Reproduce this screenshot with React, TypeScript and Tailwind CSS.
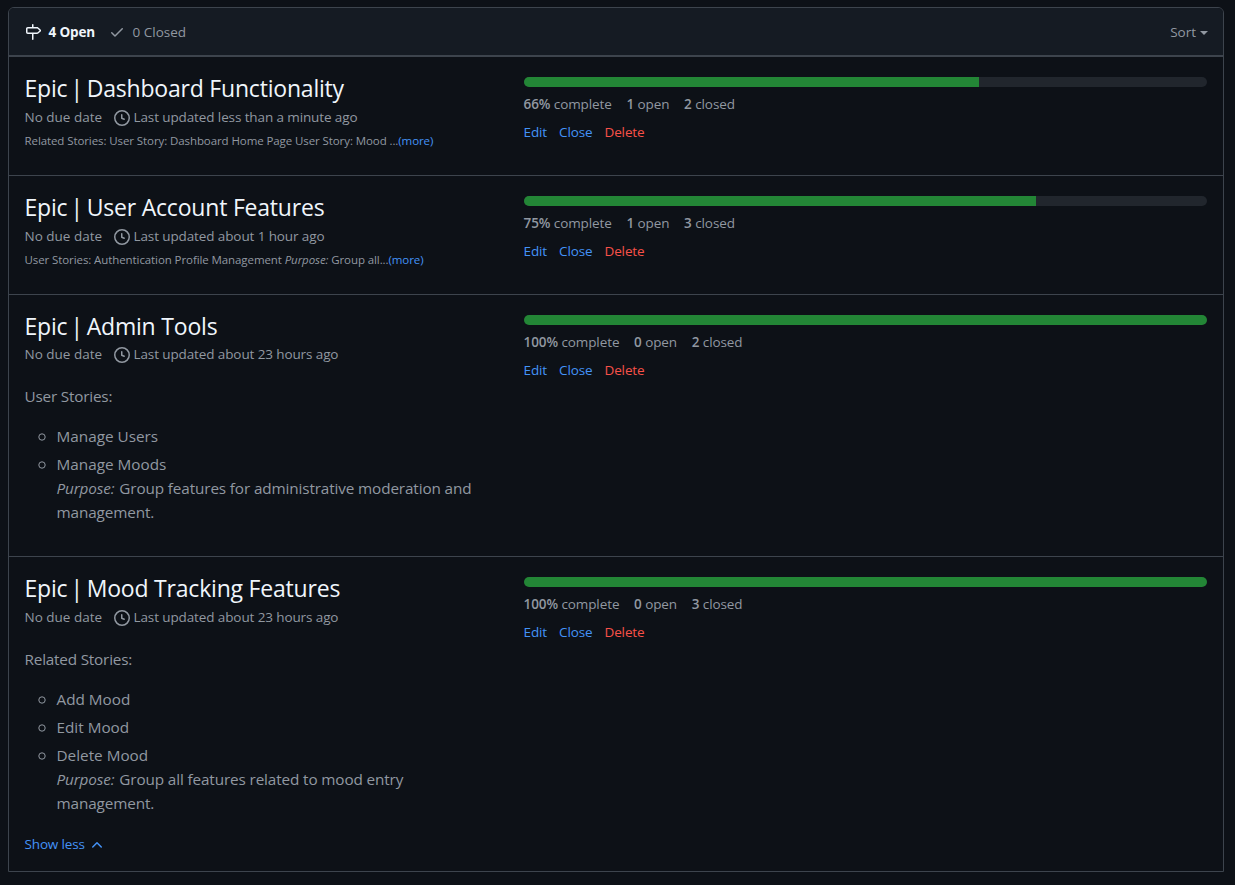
import type { ReactNode } from "react";

const ICONS = {
  milestone:
    "M7.75 0a.75.75 0 0 1 .75.75V3h3.634c.414 0 .814.147 1.13.414l2.07 1.75a1.75 1.75 0 0 1 0 2.672l-2.07 1.75a1.75 1.75 0 0 1-1.13.414H8.5v5.25a.75.75 0 0 1-1.5 0V10H2.75A1.75 1.75 0 0 1 1 8.25v-3.5C1 3.784 1.784 3 2.75 3H7V.75A.75.75 0 0 1 7.75 0Zm4.384 8.5a.25.25 0 0 0 .161-.06l2.07-1.75a.248.248 0 0 0 0-.38l-2.07-1.75a.25.25 0 0 0-.161-.06H2.75a.25.25 0 0 0-.25.25v3.5c0 .138.112.25.25.25h9.384Z",
  check:
    "M13.78 4.22a.75.75 0 0 1 0 1.06l-7.25 7.25a.75.75 0 0 1-1.06 0L2.22 9.28a.751.751 0 0 1 .018-1.042.751.751 0 0 1 1.042-.018L6 10.94l6.72-6.72a.75.75 0 0 1 1.06 0Z",
  clock:
    "M8 0a8 8 0 1 1 0 16A8 8 0 0 1 8 0ZM1.5 8a6.5 6.5 0 1 0 13 0 6.5 6.5 0 0 0-13 0Zm7-3.25v2.992l2.028.812a.75.75 0 0 1-.557 1.392l-2.5-1A.751.751 0 0 1 7 8.25v-3.5a.75.75 0 0 1 1.5 0Z",
  chevronUp:
    "M3.22 10.53a.749.749 0 0 1 0-1.06l4.25-4.25a.749.749 0 0 1 1.06 0l4.25 4.25a.749.749 0 1 1-1.06 1.06L8 6.811 4.28 10.53a.749.749 0 0 1-1.06 0Z",
};

function Icon({ name, className = "" }: { name: keyof typeof ICONS; className?: string }) {
  return (
    <svg viewBox="0 0 16 16" className={`size-4 shrink-0 fill-current ${className}`} aria-hidden="true">
      <path d={ICONS[name]} />
    </svg>
  );
}

type MilestoneProps = {
  title: string;
  updated: string;
  percent: number;
  fill: number;
  open: number;
  closed: number;
  height: string;
  metaHeight?: string;
  children: ReactNode;
};

function Milestone({ title, updated, percent, fill, open, closed, height, metaHeight = "h-[28px]", children }: MilestoneProps) {
  return (
    <li className={`flex border-t border-[#3d444d] pl-[15.5px] pr-4 pt-4 ${height}`}>
      <div className="w-[499px] shrink-0 pr-8">
        <h2 className="flex h-[30px] whitespace-pre text-[23px] leading-[30px] tracking-[-0.2px] text-[#f0f6fc]">
          <span className="w-[46px]">Epic</span>
          <span className="w-[16.2px]">|</span>
          <span>{title}</span>
        </h2>
        <div className={`flex items-center whitespace-nowrap text-[13.5px] ${metaHeight}`}>
          <span className="w-[89.5px]">No due date</span>
          <Icon name="clock" className="mr-[3.5px] mt-px" />
          <span className="tracking-[-0.11px]">{updated}</span>
        </div>
        {children}
      </div>
      <div className="flex-1 pt-1">
        <div className="h-2.5 overflow-hidden rounded-full bg-[#21262d]">
          <div className="h-full bg-[#238636]" style={{ width: `${fill}%` }} />
        </div>
        <div className="mt-[7px] flex h-5 items-center gap-[14.7px] text-[13.5px] tracking-[-0.09px]">
          <span><b className="font-semibold">{percent}%</b> complete</span>
          <span><b className="font-semibold">{open}</b> open</span>
          <span><b className="font-semibold">{closed}</b> closed</span>
        </div>
        <div className="mt-2 flex h-5 items-center gap-3 text-[13.5px] tracking-[-0.12px] text-[#4493f8]">
          <a>Edit</a>
          <a>Close</a>
          <a className="text-[#f85149]">Delete</a>
        </div>
      </div>
    </li>
  );
}

function Summary({ children }: { children: ReactNode }) {
  return (
    <p className="mt-px h-[18px] whitespace-nowrap text-[11.5px] leading-[18px] tracking-[-0.09px]">
      {children}
      <a className="text-[#4493f8]">(more)</a>
    </p>
  );
}

function Description({ heading, items, purpose }: { heading: string; items: string[]; purpose: string }) {
  return (
    <div className="pt-4 text-[15.3px] leading-6">
      <p className="tracking-[-0.2px]">{heading}</p>
      <ul className="mt-4 flex flex-col gap-1">
        {items.map((item, i) => (
          <li key={item} className="flex">
            <svg viewBox="0 0 8 8" className="ml-[13px] mr-[11px] mt-[9px] size-2 shrink-0 fill-none stroke-current">
              <circle cx="4" cy="4" r="3.2" />
            </svg>
            <div>
              <p>{item}</p>
              {i === items.length - 1 && (
                <p className="tracking-[-0.13px]">
                  <em className="mr-px">Purpose:</em> {purpose}
                </p>
              )}
            </div>
          </li>
        ))}
      </ul>
    </div>
  );
}

export default function App() {
  return (
    <main className="h-[885px] bg-[#0d1117] px-2 pt-[7px] font-['Open_Sans','Noto_Sans',sans-serif] text-[#9198a1]">
      <section className="mr-[3px] h-[865px] overflow-hidden rounded-t-md border border-[#3d444d]">
        <header className="flex h-12 items-center border-b border-[#3d444d] bg-[#151b23] pl-4 pr-[15px] pt-px text-[13.5px]">
          <Icon name="milestone" className="mr-[7.5px] text-[#f0f6fc]" />
          <span className="w-[60.5px] whitespace-nowrap font-bold tracking-[-0.15px] text-[#f0f6fc]">4 Open</span>
          <Icon name="check" className="mr-[7.5px]" />
          <span>0 Closed</span>
          <span className="ml-auto">Sort</span>
          <svg viewBox="0 0 8 4" className="ml-1 mt-px h-1 w-2 fill-current">
            <path d="M0 0h8L4 4z" />
          </svg>
        </header>
        <ul>
          <Milestone title="Dashboard Functionality" updated="Last updated less than a minute ago" percent={66} fill={66.6} open={1} closed={2} height="h-[119px]">
            <Summary>Related Stories: User Story: Dashboard Home Page User Story: Mood ...</Summary>
          </Milestone>
          <Milestone title="User Account Features" updated="Last updated about 1 hour ago" percent={75} fill={75} open={1} closed={3} height="h-[119px]">
            <Summary>
              User Stories: Authentication Profile Management <em>Purpose:</em> Group all...
            </Summary>
          </Milestone>
          <Milestone title="Admin Tools" updated="Last updated about 23 hours ago" percent={100} fill={100} open={0} closed={2} height="h-[262px]" metaHeight="h-[27px]">
            <Description heading="User Stories:" items={["Manage Users", "Manage Moods"]} purpose="Group features for administrative moderation and management." />
          </Milestone>
          <Milestone title="Mood Tracking Features" updated="Last updated about 23 hours ago" percent={100} fill={100} open={0} closed={3} height="h-[315px]">
            <Description heading="Related Stories:" items={["Add Mood", "Edit Mood", "Delete Mood"]} purpose="Group all features related to mood entry management." />
            <a className="mt-[19px] flex h-5 items-center text-[13.5px] tracking-[-0.15px] text-[#4493f8]">
              Show less
              <Icon name="chevronUp" className="ml-1 mt-px" />
            </a>
          </Milestone>
        </ul>
      </section>
    </main>
  );
}
